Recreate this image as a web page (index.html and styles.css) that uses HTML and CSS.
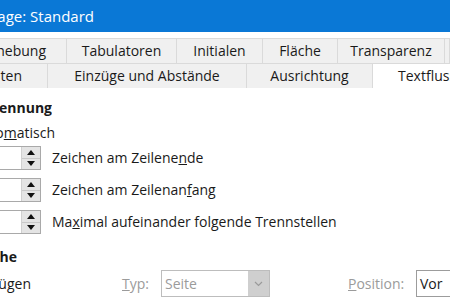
FILE: index.html
```html
<!DOCTYPE html>
<html lang="de">
  <head>
    <meta charset="UTF-8" />
    <title>Absatzvorlage: Standard</title>
    <link rel="stylesheet" href="styles.css">
  </head>
  <body>
    <div class="dialog">
      <div class="titlebar">
        <span class="clip title-clip"><span>Absatzvorlage: Standard</span></span>
      </div>

      <div class="tabs">
        <div class="tab-row">
          <div class="tab tab-first1"><span>Hervorhebung</span></div>
          <div class="tab tab-w110">Tabulatoren</div>
          <div class="tab tab-w86">Initialen</div>
          <div class="tab tab-w75">Fläche</div>
          <div class="tab tab-w107">Transparenz</div>
          <div class="tab tab-rest"></div>
        </div>
        <div class="tab-row">
          <div class="tab tab-first2"><span>Verwalten</span></div>
          <div class="tab tab-w199">Einzüge und Abstände</div>
          <div class="tab tab-w126">Ausrichtung</div>
          <div class="tab tab-active">Textfluss</div>
        </div>
      </div>

      <div class="content">
        <div class="row heading-row">
          <span class="clip clip-52"><span class="bold">Silbentrennung</span></span>
        </div>
        <div class="row check-row">
          <span class="clip clip-55"><span>Auto<u>m</u>atisch</span></span>
        </div>

        <div class="row spin-row">
          <div class="spin">
            <div class="spin-field"></div>
            <div class="spin-btns">
              <div class="spin-btn"><span class="arrow-up"></span></div>
              <div class="spin-btn"><span class="arrow-down"></span></div>
            </div>
          </div>
          <span class="label">Zeichen am Zeilene<u>n</u>de</span>
        </div>
        <div class="row spin-row">
          <div class="spin">
            <div class="spin-field"></div>
            <div class="spin-btns">
              <div class="spin-btn"><span class="arrow-up"></span></div>
              <div class="spin-btn"><span class="arrow-down"></span></div>
            </div>
          </div>
          <span class="label">Zeichen am Zeilenan<u>f</u>ang</span>
        </div>
        <div class="row spin-row">
          <div class="spin">
            <div class="spin-field"></div>
            <div class="spin-btns">
              <div class="spin-btn"><span class="arrow-up"></span></div>
              <div class="spin-btn"><span class="arrow-down"></span></div>
            </div>
          </div>
          <span class="label">Ma<u>x</u>imal aufeinander folgende Trennstellen</span>
        </div>

        <div class="row heading-row2">
          <span class="clip clip-16"><span class="bold">Umbrüche</span></span>
        </div>
        <div class="row insert-row">
          <span class="clip clip-30"><span>Einfügen</span></span>
          <span class="disabled typ-label"><u>T</u>yp:</span>
          <div class="combo combo-typ">
            <span class="combo-text">Seite</span>
            <span class="combo-btn">
              <svg width="9" height="6" viewBox="0 0 9 6"><path d="M1 1 L4.5 4.5 L8 1" fill="none" stroke="#9a9a9a" stroke-width="1.2"/></svg>
            </span>
          </div>
          <span class="disabled pos-label"><u>P</u>osition:</span>
          <div class="combo combo-pos">
            <span class="combo-text">Vor</span>
          </div>
        </div>
      </div>
    </div>
  </body>
</html>
```

FILE: styles.css
```css
body {
  margin: 0;
  font-family: "Open Sans", "Noto Sans", sans-serif;
  font-size: 14px;
  color: #1a1a1a;
  background: #fff;
  overflow: hidden;
}

.dialog {
  width: 450px;
  height: 300px;
  overflow: hidden;
  display: flex;
  flex-direction: column;
}

/* clipped text, cut at the left edge of the window */
.clip {
  display: flex;
  justify-content: flex-end;
  overflow: hidden;
  white-space: nowrap;
  flex-shrink: 0;
}

.bold {
  font-weight: 700;
}

/* title bar */
.titlebar {
  height: 32px;
  background: #0a78d6;
  color: #fff;
  display: flex;
  align-items: center;
  font-size: 15px;
  flex-shrink: 0;
}

.title-clip {
  width: 94px;
  padding-bottom: 1px;
}

/* tabs */
.tabs {
  padding-top: 6px;
  background: #fff;
  flex-shrink: 0;
}

.tab-row {
  display: flex;
  height: 25px;
}

.tab {
  box-sizing: border-box;
  flex-shrink: 0;
  display: flex;
  align-items: center;
  justify-content: center;
  white-space: nowrap;
  overflow: hidden;
  background: #f0f0f0;
  border-top: 1px solid #dadada;
  border-right: 1px solid #dadada;
  padding-bottom: 1px;
}

.tab-first1 {
  width: 67px;
  justify-content: flex-end;
  padding-right: 20px;
}

.tab-first2 {
  width: 48px;
  justify-content: flex-end;
  padding-right: 25px;
}

.tab-w110 { width: 110px; }
.tab-w86 { width: 86px; }
.tab-w75 { width: 75px; }
.tab-w107 { width: 107px; }
.tab-w199 { width: 199px; }
.tab-w126 { width: 126px; }

.tab-rest {
  flex: 1;
}

.tab-active {
  width: 130px;
  background: #fff;
  border-right: none;
  justify-content: flex-start;
  padding-left: 25px;
}

/* page content */
.content {
  display: flex;
  flex-direction: column;
}

.row {
  display: flex;
  align-items: center;
  white-space: nowrap;
}

.row > * {
  flex-shrink: 0;
}

.heading-row {
  margin-top: 9px;
  height: 20px;
}

.check-row {
  margin-top: 5px;
  height: 20px;
}

.clip-52 { width: 52px; }
.clip-55 { width: 55px; }
.clip-16 { width: 17px; }
.clip-30 { width: 31px; }

.spin-row {
  height: 24px;
  margin-top: 8px;
}

.check-row + .spin-row {
  margin-top: 4px;
}

.spin {
  display: flex;
  width: 41px;
  height: 24px;
  box-sizing: border-box;
  border: 1px solid #a9a9a9;
  border-left: none;
  background: #fff;
}

.spin-field {
  width: 22px;
}

.spin-btns {
  width: 18px;
  display: flex;
  flex-direction: column;
  background: #e4e4e4;
  border-left: 1px solid #d0d0d0;
}

.spin-btn {
  flex: 1;
  display: flex;
  align-items: center;
  justify-content: center;
}

.spin-btn + .spin-btn {
  border-top: 1px solid #c8c8c8;
}

.arrow-up,
.arrow-down {
  width: 0;
  height: 0;
  border-left: 4px solid transparent;
  border-right: 4px solid transparent;
}

.arrow-up {
  border-bottom: 5px solid #111;
}

.arrow-down {
  border-top: 5px solid #111;
}

.label {
  margin-left: 11px;
  padding-bottom: 1px;
}

.heading-row2 {
  margin-top: 12px;
  height: 20px;
}

.insert-row {
  margin-top: 4px;
  height: 27px;
}

.disabled {
  color: #9b9b9b;
}

.typ-label {
  margin-left: 91px;
  width: 39px;
}

.combo {
  box-sizing: border-box;
  height: 27px;
  border: 1px solid #bdbdbd;
  display: flex;
  align-items: center;
  color: #9b9b9b;
}

.combo-typ {
  width: 109px;
}

.combo-text {
  flex: 1;
  padding-left: 3px;
}

.combo-btn {
  width: 21px;
  height: 100%;
  background: #cfcfcf;
  display: flex;
  align-items: center;
  justify-content: center;
}

.pos-label {
  margin-left: 78px;
  width: 68px;
}

.combo-pos {
  width: 60px;
  color: #1a1a1a;
  border-color: #9c9c9c;
}
```
